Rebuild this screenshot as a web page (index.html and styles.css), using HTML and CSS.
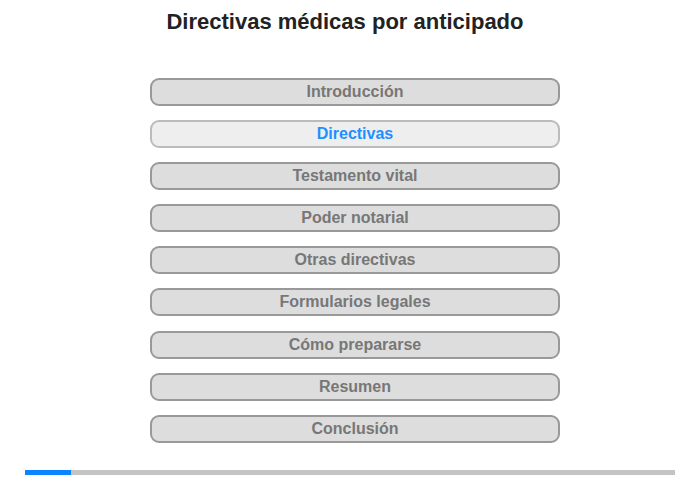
FILE: index.html
```html
<!DOCTYPE html>
<html lang="es">
<head>
<meta charset="utf-8">
<title>Directivas médicas por anticipado</title>
<link rel="stylesheet" href="styles.css">
</head>
<body>
<div class="page">
  <h1 class="title">Directivas médicas por anticipado</h1>
  <nav class="menu">
    <div class="item">Introducción</div>
    <div class="item active">Directivas</div>
    <div class="item">Testamento vital</div>
    <div class="item">Poder notarial</div>
    <div class="item">Otras directivas</div>
    <div class="item">Formularios legales</div>
    <div class="item">Cómo prepararse</div>
    <div class="item">Resumen</div>
    <div class="item">Conclusión</div>
  </nav>
  <div class="progress"><div class="progress-fill" style="width:46px"></div></div>
</div>
</body>
</html>
```
FILE: styles.css
```css
html, body {
  margin: 0;
  padding: 0;
  background: #fff;
}
.page {
  width: 700px;
  height: 480px;
  font-family: "Liberation Sans", Arial, sans-serif;
  display: flex;
  flex-direction: column;
}
.title {
  margin: 9px 0 0 0;
  font-size: 22px;
  line-height: 26px;
  font-weight: bold;
  color: #222;
  text-align: center;
  padding-right: 10px;
}
.menu {
  margin: 43px 0 0 150px;
  width: 410px;
  display: flex;
  flex-direction: column;
  gap: 14.1px;
}
.item {
  box-sizing: border-box;
  height: 28px;
  border: 2px solid #999;
  border-radius: 9px;
  background: #ddd;
  color: #777;
  font-size: 16px;
  font-weight: bold;
  line-height: 24px;
  text-align: center;
}
.item.active {
  background: #eee;
  border-color: #bbb;
  color: #1e90ff;
}
.progress {
  margin: 27px 0 0 25px;
  width: 650px;
  height: 5px;
  background: #c4c4c4;
}
.progress-fill {
  height: 100%;
  background: #0a84ff;
}
```
